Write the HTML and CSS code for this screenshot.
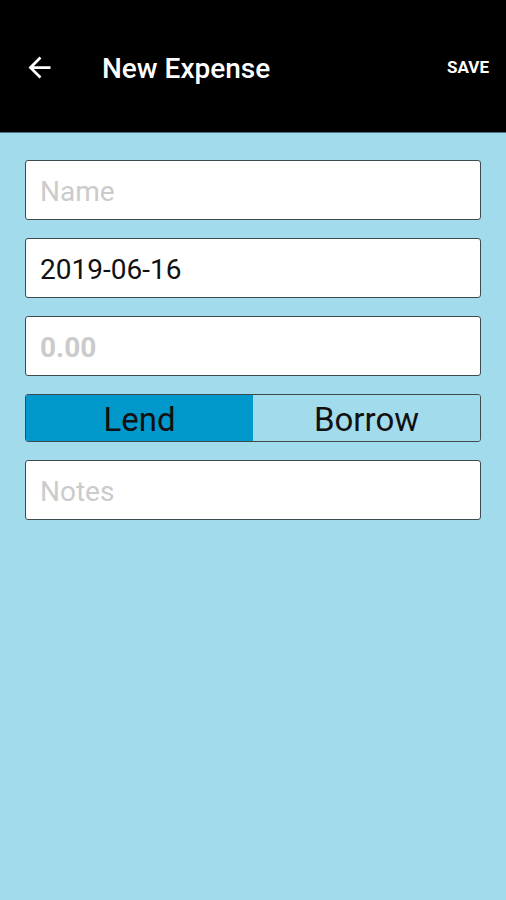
FILE: index.html
```html
<!DOCTYPE html>
<html lang="en">
<head>
  <meta charset="UTF-8">
  <title>New Expense</title>
  <link rel="stylesheet" href="styles.css">
</head>
<body>
  <header class="toolbar">
    <button type="button" class="back" aria-label="Back">
      <svg width="33" height="33" viewBox="0 0 24 24">
        <path fill="#fff" d="M20 11H7.83l5.59-5.59L12 4l-8 8 8 8 1.41-1.41L7.83 13H20v-2z"/>
      </svg>
    </button>
    <h1 class="title">New Expense</h1>
    <button type="button" class="save">SAVE</button>
  </header>

  <form class="expense-form">
    <input type="text" class="field" placeholder="Name">
    <input type="text" class="field" value="2019-06-16">
    <input type="text" class="field amount" placeholder="0.00">

    <!-- lend / borrow switch -->
    <div class="toggle">
      <button type="button" class="toggle-btn active">Lend</button>
      <button type="button" class="toggle-btn">Borrow</button>
    </div>

    <input type="text" class="field" placeholder="Notes">
  </form>
</body>
</html>
```

FILE: styles.css
```css
html, body {
  margin: 0;
  min-height: 100%;
}
body {
  font-family: Roboto, "Liberation Sans", Arial, sans-serif;
  background: #a2dcec;
  min-height: 900px;
}
.toolbar {
  display: flex;
  align-items: center;
  box-sizing: border-box;
  height: 133px;
  padding: 38px 0 36px;
  background: #000;
  border-bottom: 1px solid #4d7380;
}
.back {
  background: none;
  border: none;
  padding: 0;
  margin-left: 23px;
  width: 33px;
  height: 33px;
  cursor: pointer;
}
.back svg {
  display: block;
}
.title {
  margin: 2px 0 0 46px;
  flex: 1;
  color: #fff;
  font-size: 28px;
  font-weight: 500;
}
.save {
  background: none;
  border: none;
  color: #fff;
  font-family: inherit;
  font-size: 17px;
  font-weight: 700;
  padding: 0;
  margin-right: 17px;
  cursor: pointer;
}
.expense-form {
  display: flex;
  flex-direction: column;
  gap: 18px;
  padding: 27px 25px 0;
}
.field {
  box-sizing: border-box;
  height: 60px;
  padding: 3px 14px 0;
  border: 1px solid #3f4a4e;
  border-radius: 3px;
  background: #fff;
  font-family: inherit;
  font-size: 28px;
  color: #111;
  outline: none;
}
.field::placeholder {
  color: #cbcbcb;
}
.amount::placeholder {
  font-weight: 700;
}
.toggle {
  display: flex;
  height: 48px;
  box-sizing: border-box;
  border: 1px solid #3f4a4e;
  border-radius: 3px;
  overflow: hidden;
}
.toggle-btn {
  flex: 1;
  border: none;
  background: #a2dcec;
  font-family: inherit;
  font-size: 33px;
  color: #111;
  padding: 3px 0 0;
  cursor: pointer;
}
.toggle-btn.active {
  background: #0199cb;
}
```
